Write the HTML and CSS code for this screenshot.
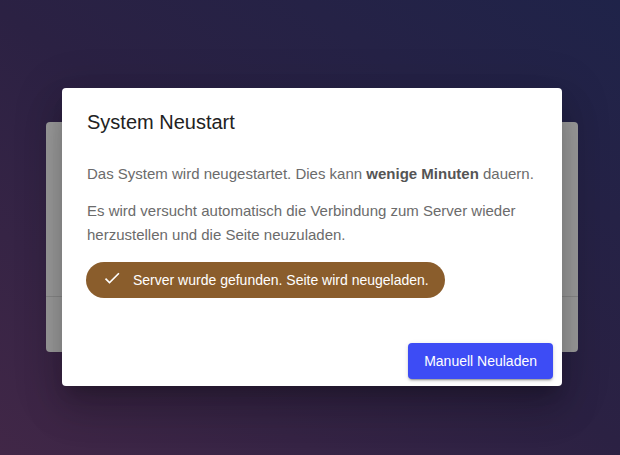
FILE: index.html
```html
<!DOCTYPE html>
<html lang="de">
<head>
    <meta charset="UTF-8">
    <meta name="viewport" content="width=device-width, initial-scale=1.0">
    <title>System Neustart</title>
    <link rel="stylesheet" href="styles.css">
</head>
<body>

    <div class="app">
        <div class="card">
            <div class="card-top"></div>
            <div class="card-bottom"></div>
        </div>
    </div>

    <div class="dialog">
        <div class="dialog-title">System Neustart</div>
        <div class="dialog-text">
            <p>Das System wird neugestartet. Dies kann <b>wenige Minuten</b> dauern.</p>
            <p>Es wird versucht automatisch die Verbindung zum Server wieder herzustellen und die Seite neuzuladen.</p>
            <div class="chip">
                <svg class="chip-icon" viewBox="0 0 24 24"><path d="M21,7L9,19L3.5,13.5L4.91,12.09L9,16.17L19.59,5.59L21,7Z"/></svg>
                <span>Server wurde gefunden. Seite wird neugeladen.</span>
            </div>
        </div>
        <div class="dialog-actions">
            <button class="button">Manuell Neuladen</button>
        </div>
    </div>

</body>
</html>
```

FILE: styles.css
```css
html, body {
    height: 100%;
}

body {
    margin: 0;
    font-family: "Liberation Sans", Arial, sans-serif;
    background: linear-gradient(35deg, #412747 0%, #2b2143 50%, #1f2349 100%);
    overflow: hidden;
}

.app {
    padding: 122px 42px 0 46px;
}

.card {
    border-radius: 4px;
    overflow: hidden;
    background: #9d9d9d;
}

.card-top {
    height: 174px;
    border-bottom: 1px solid #8a8a8a;
}

.card-bottom {
    height: 55px;
}

.dialog {
    position: absolute;
    top: 88px;
    left: 62px;
    width: 500px;
    height: 298px;
    display: flex;
    flex-direction: column;
    background: #fff;
    border-radius: 4px;
    box-shadow: 0 11px 15px -7px rgba(0, 0, 0, 0.2),
                0 24px 38px 3px rgba(0, 0, 0, 0.14),
                0 9px 46px 8px rgba(0, 0, 0, 0.12);
}

.dialog-title {
    padding: 18px 24px 10px 25px;
    font-size: 20px;
    line-height: 32px;
    color: #222;
}

.dialog-text {
    flex: 1;
    padding: 14px 24px 0 25px;
    font-size: 15px;
    line-height: 24px;
    color: #6b6b6b;
}

.dialog-text p {
    margin: 0 0 13px;
}

.dialog-text b {
    color: #555;
}

.chip {
    display: inline-flex;
    align-items: center;
    height: 36px;
    margin-top: 2px;
    margin-left: -1px;
    padding: 0 16px;
    border-radius: 18px;
    background: #8a5d2c;
    color: #fff;
    font-size: 14px;
}

.chip-icon {
    width: 20px;
    height: 20px;
    margin-right: 11px;
    margin-top: -4px;
    fill: #fff;
}

.dialog-actions {
    display: flex;
    justify-content: flex-end;
    padding: 8px 9px 7px;
}

.button {
    height: 36px;
    padding: 0 16px;
    border: none;
    border-radius: 4px;
    background: #3d4cf5;
    color: #fff;
    font-family: "Liberation Sans", Arial, sans-serif;
    font-size: 14px;
    font-weight: 500;
    cursor: pointer;
    box-shadow: 0 3px 1px -2px rgba(0, 0, 0, 0.2),
                0 2px 2px 0 rgba(0, 0, 0, 0.14),
                0 1px 5px 0 rgba(0, 0, 0, 0.12);
}
```
